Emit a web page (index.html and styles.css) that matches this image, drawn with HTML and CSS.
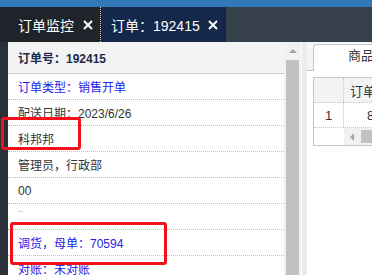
FILE: index.html
```html
<!DOCTYPE html>
<html lang="zh-CN">
<head>
  <meta charset="UTF-8">
  <meta name="viewport" content="width=device-width, initial-scale=1.0">
  <title>订单：192415</title>
  <link rel="stylesheet" href="styles.css">
</head>
<body>
  <div class="page">
    <div class="topline"></div>
    <div class="tabbar">
      <div class="tab tab-monitor">
        <span>订单监控</span>
        <svg class="tab-close" width="10" height="10" viewBox="0 0 10 10"><path d="M1 1L9 9M9 1L1 9"/></svg>
      </div>
      <div class="tab tab-order">
        <span>订单：192415</span>
        <svg class="tab-close" width="10" height="10" viewBox="0 0 10 10"><path d="M1 1L9 9M9 1L1 9"/></svg>
      </div>
    </div>

    <div class="main">
      <div class="rail"></div>

      <div class="detail">
        <div class="detail-head">订单号：192415</div>
        <div class="row link">订单类型：销售开单</div>
        <div class="row">配送日期：2023/6/26</div>
        <div class="row">科邦邦</div>
        <div class="row">管理员，行政部</div>
        <div class="row">00</div>
        <div class="row small">..</div>
        <div class="row link">调货，母单：70594</div>
        <div class="row link">对账：未对账</div>
      </div>

      <div class="vscroll">
        <div class="vs-up"><span class="arrow-up"></span></div>
        <div class="vs-thumb"></div>
      </div>

      <div class="divider"></div>

      <div class="right">
        <div class="rt-strip">
          <div class="rt-tab">商品明细</div>
        </div>
        <div class="grid">
          <div class="grid-row grid-head">
            <div class="c1"></div>
            <div class="c2">订单号</div>
          </div>
          <div class="grid-row">
            <div class="c1 num">1</div>
            <div class="c2 val">8</div>
          </div>
          <div class="grid-row grid-scroll">
            <div class="c1 blank"></div>
            <div class="hs-track">
              <span class="arrow-left"></span>
              <span class="hs-thumb"></span>
            </div>
          </div>
        </div>
      </div>
    </div>

    <!-- review marks -->
    <div class="mark mark-a"></div>
    <div class="mark mark-b"></div>
  </div>
</body>
</html>
```

FILE: styles.css
```css
body {
    margin: 0;
    font-family: "Liberation Sans", "Noto Sans CJK SC", sans-serif;
    background-color: #ffffff;
    overflow: hidden;
}

.page {
    position: relative;
    height: 275px;
}

.topline {
    height: 7px;
    background-color: #3178b9;
}

.tabbar {
    display: flex;
    height: 35px;
    background-color: #37414b;
}

.tab {
    display: flex;
    align-items: center;
    gap: 9px;
    color: #ffffff;
    font-size: 14px;
    flex-shrink: 0;
}

.tab-monitor {
    width: 82px;
    padding-left: 18px;
    background-color: #1f242b;
    border-right: 1px dotted #d0d0d0;
}

.tab-order {
    width: 115px;
    padding-left: 10px;
    gap: 8px;
    background-color: #13284a;
}

.tab-close path {
    stroke: #ffffff;
    stroke-width: 2;
    fill: none;
}

.main {
    display: flex;
    height: 233px;
}

.rail {
    width: 8px;
    flex-shrink: 0;
    background-color: #2a3038;
}

.detail {
    width: 276px;
    flex-shrink: 0;
    background-color: #ffffff;
}

.detail-head {
    display: flex;
    align-items: center;
    height: 31px;
    padding-left: 10px;
    background-color: #f3f3f3;
    border-bottom: 1px solid #c9c9c9;
    font-size: 12px;
    font-weight: bold;
    color: #1e2a4a;
}

.row {
    display: flex;
    align-items: center;
    height: 25px;
    padding-left: 10px;
    border-bottom: 1px dotted #bdbdbd;
    font-size: 12px;
    color: #333333;
}

.row.link {
    color: #2323e6;
}

.row.small {
    font-size: 9px;
    color: #c08020;
    align-items: flex-start;
}

.vscroll {
    display: flex;
    flex-direction: column;
    align-items: center;
    width: 17px;
    flex-shrink: 0;
    background-color: #f1f1f1;
}

.vs-up {
    display: flex;
    align-items: center;
    justify-content: center;
    height: 18px;
}

.arrow-up {
    width: 0;
    height: 0;
    border-left: 4px solid transparent;
    border-right: 4px solid transparent;
    border-bottom: 4px solid #a3a3a3;
}

.vs-thumb {
    flex: 1;
    width: 13px;
    background-color: #c1c1c1;
}

.divider {
    width: 5px;
    flex-shrink: 0;
    border-left: 1px solid #fafafa;
    background-color: #ececec;
}

.right {
    flex: 1;
    min-width: 0;
    overflow: hidden;
    background-color: #ffffff;
}

.rt-strip {
    display: flex;
    align-items: flex-end;
    height: 25px;
    padding: 3px 0 0 6px;
    background-color: #f5f5f5;
    border-bottom: 1px solid #c6c6c6;
}

.rt-tab {
    flex-shrink: 0;
    height: 26px;
    margin-bottom: -1px;
    padding: 0 20px 0 34px;
    line-height: 22px;
    white-space: nowrap;
    background-color: #ffffff;
    border: 1px solid #c6c6c6;
    border-bottom: none;
    border-top-left-radius: 4px;
    font-size: 13px;
    color: #333333;
}

.grid {
    width: 200px;
    margin: 6px 0 0 6px;
    border: 1px solid #c6c6c6;
    border-right: none;
}

.grid-row {
    display: flex;
    height: 24px;
    border-bottom: 1px dotted #c6c6c6;
    font-size: 13px;
    color: #333333;
}

.grid-head {
    background-color: #f3f3f3;
}

.c1 {
    display: flex;
    align-items: center;
    justify-content: center;
    width: 29px;
    flex-shrink: 0;
    border-right: 1px dotted #c6c6c6;
}

.c2 {
    display: flex;
    align-items: center;
    padding-left: 6px;
    white-space: nowrap;
}

.c2.val {
    padding-left: 23px;
}

.grid-scroll {
    height: 17px;
    border-bottom: none;
}

.c1.blank {
    width: 30px;
    border-right: none;
}

.hs-track {
    display: flex;
    align-items: center;
    flex: 1;
    padding-left: 6px;
    gap: 7px;
    background-color: #f1f1f1;
}

.arrow-left {
    width: 0;
    height: 0;
    border-top: 4px solid transparent;
    border-bottom: 4px solid transparent;
    border-right: 4px solid #a3a3a3;
}

.hs-thumb {
    flex: 1;
    height: 13px;
    background-color: #c1c1c1;
}

.mark {
    position: absolute;
    box-sizing: border-box;
    border: 3px solid #f2111a;
    border-radius: 3px;
}

.mark-a {
    left: 1px;
    top: 117px;
    width: 80px;
    height: 33px;
}

.mark-b {
    left: 10px;
    top: 222px;
    width: 157px;
    height: 43px;
}
```
